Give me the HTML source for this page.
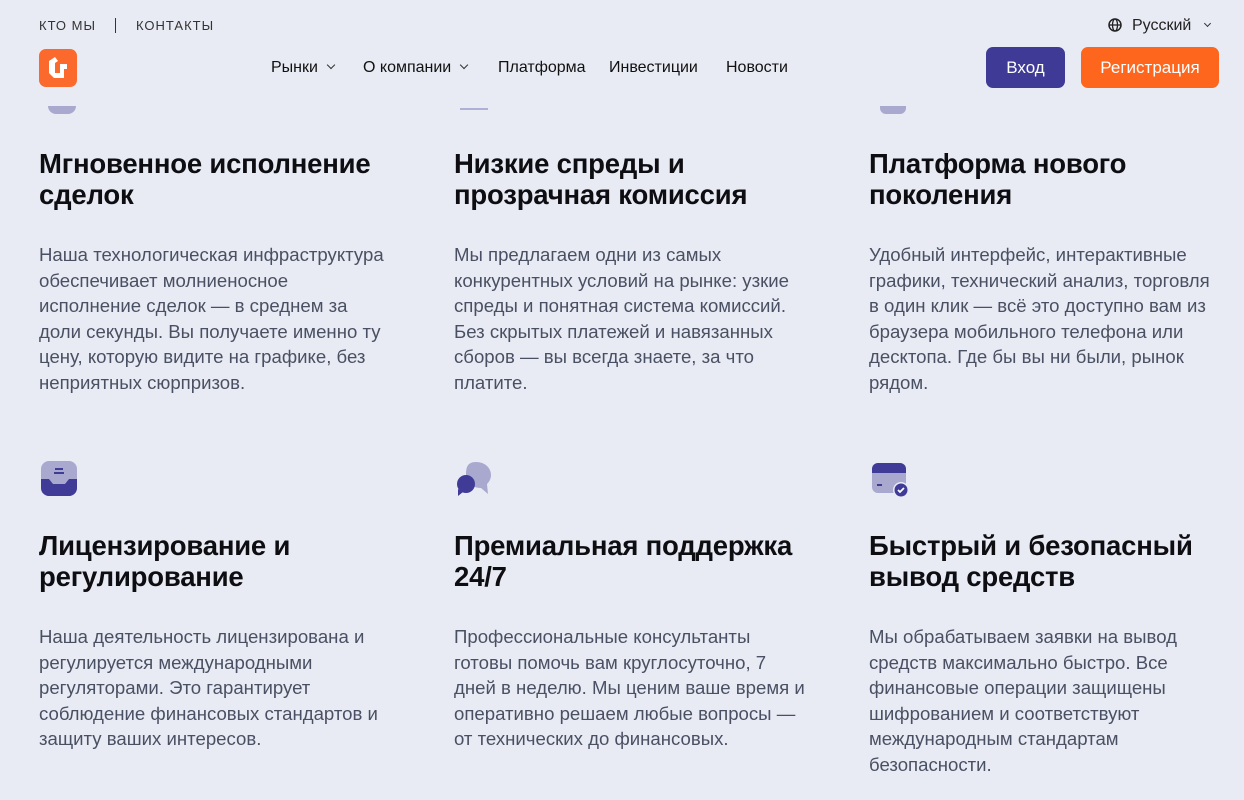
<!DOCTYPE html>
<html><head><meta charset="utf-8"><style>
*{margin:0;padding:0;box-sizing:border-box}
body{width:1244px;height:800px;overflow:hidden;background:#e8ebf4;font-family:"Liberation Sans",sans-serif;position:relative;color:#111}
.a{position:absolute}
.top{top:18px;font-size:13px;letter-spacing:1px;color:#333}
.nav{top:59px;font-size:16px;color:#111}
.btn{top:47px;height:41px;border-radius:7px;color:#fff;font-size:17px;display:flex;align-items:center;justify-content:center}
h2{position:absolute;font-size:27.5px;line-height:31px;font-weight:600;color:#0d0d12;width:380px;letter-spacing:-0.2px}
p{position:absolute;font-size:18.6px;line-height:25.5px;color:#4a5063;width:352px}
.chev{display:inline-block;width:6px;height:6px;border-right:1.3px solid #333;border-bottom:1.3px solid #333;transform:rotate(45deg);margin-left:10px;position:relative;top:-4px}
</style></head><body>
<div class="a top" style="left:39px">КТО МЫ</div>
<div class="a" style="left:115px;top:18px;width:1px;height:15px;background:#333"></div>
<div class="a top" style="left:136px">КОНТАКТЫ</div>
<div class="a" style="left:1108px;top:17px;font-size:16px;color:#222"><svg width="14" height="14" viewBox="0 0 14 14" style="vertical-align:-2px;margin-right:10px"><circle cx="7" cy="7" r="6" fill="none" stroke="#222" stroke-width="1.5"/><ellipse cx="7" cy="7" rx="2.5" ry="6" fill="none" stroke="#222" stroke-width="1.3"/><path d="M1 7h12" stroke="#222" stroke-width="1.3"/></svg>Русский<span class="chev" style="margin-left:14px;width:5px;height:5px"></span></div>
<div class="a" style="left:39px;top:49px;width:38px;height:38px;background:#fb6a2c;border-radius:7px">
<svg width="38" height="38" viewBox="0 0 38 38"><path d="M10 12l6-4 3 4-3 2v10h5v-9h7v5h-3v9h-10l-5-5z" fill="#fff"/></svg></div>
<div class="a nav" style="left:271px">Рынки<span class="chev"></span></div>
<div class="a nav" style="left:363px">О компании<span class="chev"></span></div>
<div class="a nav" style="left:498px">Платформа</div>
<div class="a nav" style="left:609px">Инвестиции</div>
<div class="a nav" style="left:726px">Новости</div>
<div class="a btn" style="left:986px;width:79px;background:#3f3a96">Вход</div>
<div class="a btn" style="left:1081px;width:138px;background:#fd661c">Регистрация</div>
<div class="a" style="left:48px;top:106px;width:28px;height:8px;border-radius:0 0 10px 10px;background:#a9a9d0"></div>
<div class="a" style="left:460px;top:108px;width:28px;height:2px;background:#b0b0d6"></div>
<div class="a" style="left:880px;top:106px;width:26px;height:8px;border-radius:0 0 6px 6px;background:#a9a9d0"></div>
<h2 style="left:39px;top:148px">Мгновенное исполнение сделок</h2>
<h2 style="left:454px;top:148px">Низкие спреды и прозрачная комиссия</h2>
<h2 style="left:869px;top:148px">Платформа нового поколения</h2>
<p style="left:39px;top:242px">Наша технологическая инфраструктура обеспечивает молниеносное исполнение сделок — в среднем за доли секунды. Вы получаете именно ту цену, которую видите на графике, без неприятных сюрпризов.</p>
<p style="left:454px;top:242px">Мы предлагаем одни из самых конкурентных условий на рынке: узкие спреды и понятная система комиссий. Без скрытых платежей и навязанных сборов — вы всегда знаете, за что платите.</p>
<p style="left:869px;top:242px">Удобный интерфейс, интерактивные графики, технический анализ, торговля в один клик — всё это доступно вам из браузера мобильного телефона или десктопа. Где бы вы ни были, рынок рядом.</p>
<svg class="a" style="left:41px;top:461px" width="36" height="36" viewBox="0 0 36 36"><rect x="0" y="0" width="36" height="35" rx="8" fill="#a9a9d0"/><path d="M0 18h8l4 5h12l4-5h8v9a8 8 0 0 1-8 8H8a8 8 0 0 1-8-8z" fill="#413b98"/><rect x="14" y="7" width="8" height="2" fill="#413b98"/><rect x="13" y="11" width="10" height="2" fill="#413b98"/></svg>
<svg class="a" style="left:456px;top:461px" width="36" height="36" viewBox="0 0 36 36"><path d="M20 1c9 0 15 6 15 13 0 4-2 7-4 9l1 10-7-6c-9 0-15-6-15-13S11 1 20 1z" fill="#a9a9d0"/><ellipse cx="10" cy="23" rx="9" ry="9" fill="#413b98"/><path d="M2 28l0 7 5-4z" fill="#413b98"/></svg>
<svg class="a" style="left:871px;top:463px" width="38" height="36" viewBox="0 0 38 36"><rect x="1" y="0" width="34" height="30" rx="6" fill="#a9a9d0"/><path d="M1 10V6a6 6 0 0 1 6-6h22a6 6 0 0 1 6 6v4z" fill="#413b98"/><rect x="6" y="21" width="5" height="2" fill="#413b98"/><circle cx="30" cy="27" r="8" fill="#e8ebf4"/><circle cx="30" cy="27" r="6.5" fill="#413b98"/><path d="M27 27l2 2 4-4" stroke="#fff" stroke-width="1.7" fill="none"/></svg>
<h2 style="left:39px;top:530px">Лицензирование и регулирование</h2>
<h2 style="left:454px;top:530px">Премиальная поддержка 24/7</h2>
<h2 style="left:869px;top:530px">Быстрый и безопасный вывод средств</h2>
<p style="left:39px;top:624px">Наша деятельность лицензирована и регулируется международными регуляторами. Это гарантирует соблюдение финансовых стандартов и защиту ваших интересов.</p>
<p style="left:454px;top:624px">Профессиональные консультанты готовы помочь вам круглосуточно, 7 дней в неделю. Мы ценим ваше время и оперативно решаем любые вопросы — от технических до финансовых.</p>
<p style="left:869px;top:624px">Мы обрабатываем заявки на вывод средств максимально быстро. Все финансовые операции защищены шифрованием и соответствуют международным стандартам безопасности.</p>
</body></html>
